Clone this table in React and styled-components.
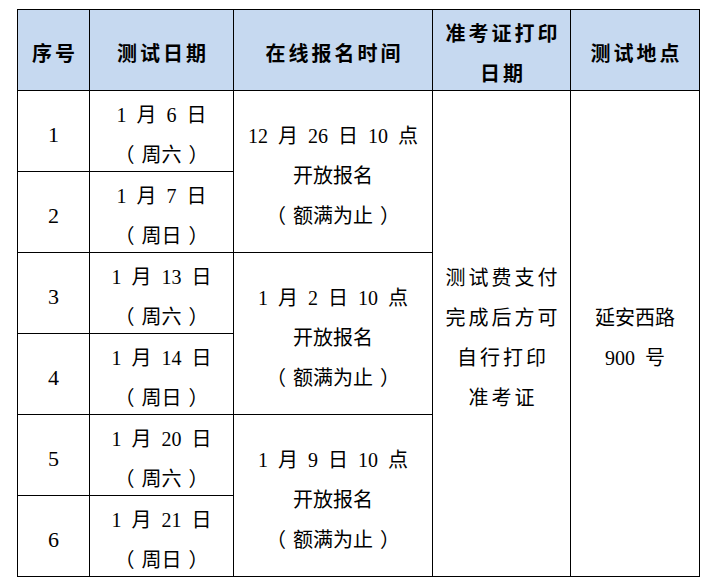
import styled, { createGlobalStyle } from "styled-components";

const GlobalStyle = createGlobalStyle`
  body {
    margin: 0;
    background: #ffffff;
    font-family: "Liberation Serif", "Noto Sans CJK SC", serif;
  }
`;

const Page = styled.div`
  padding: 9px 0 0 17px;
`;

const Table = styled.table`
  border-collapse: collapse;
  table-layout: fixed;
  width: 682px;
  color: #000000;
`;

const HeadRow = styled.tr`
  height: 81px;
  background: #c6d9f0;
`;

const BodyRow = styled.tr`
  height: 80.6px;
`;

const HeadCell = styled.th`
  border: 1px solid #000000;
  padding: 0 0 0 3px;
  font-size: 20px;
  font-weight: bold;
  letter-spacing: 3px;
  line-height: 40px;
  text-align: center;
  vertical-align: middle;
`;

const Cell = styled.td`
  border: 1px solid #000000;
  padding: 0 0 0 ${(p) => (p.$spaced ? 3 : 0)}px;
  font-size: ${(p) => (p.$big ? 22 : 20)}px;
  letter-spacing: ${(p) => (p.$spaced ? 3 : 0)}px;
  word-spacing: 5px;
  line-height: 40px;
  text-align: center;
  vertical-align: middle;
`;

/* nudges the glyphs down to sit where the Song-style font sat */
const Stack = styled.div`
  padding-top: 4px;
  margin-bottom: -4px;
`;

const Line = styled.div`
  white-space: nowrap;
`;

/* brackets stand a little apart from the words, as in the source document */
const Paren = styled.span`
  display: inline-block;
  margin: ${(p) => (p.$open ? "0 7px 0 0" : "0 0 0 7px")};
`;

const columns = [
  { width: 72, title: ["序号"] },
  { width: 144, title: ["测试日期"] },
  { width: 199, title: ["在线报名时间"] },
  { width: 138, title: ["准考证打印", "日期"] },
  { width: 129, title: ["测试地点"] },
];

const dates = [
  ["1 月 6 日", "（周六）"],
  ["1 月 7 日", "（周日）"],
  ["1 月 13 日", "（周六）"],
  ["1 月 14 日", "（周日）"],
  ["1 月 20 日", "（周六）"],
  ["1 月 21 日", "（周日）"],
];

const signups = ["12 月 26 日 10 点", "1 月 2 日 10 点", "1 月 9 日 10 点"];

function Text({ value }) {
  if (!value.startsWith("（")) return value;
  return (
    <>
      <Paren $open>（</Paren>
      {value.slice(1, -1)}
      <Paren>）</Paren>
    </>
  );
}

function Lines({ items }) {
  return (
    <Stack>
      {items.map((t) => (
        <Line key={t}>
          <Text value={t} />
        </Line>
      ))}
    </Stack>
  );
}

export default function App() {
  return (
    <Page>
      <GlobalStyle />
      <Table>
        <colgroup>
          {columns.map((c, i) => (
            <col key={i} style={{ width: c.width }} />
          ))}
        </colgroup>
        <thead>
          <HeadRow>
            {columns.map((c, i) => (
              <HeadCell key={i}>
                <Lines items={c.title} />
              </HeadCell>
            ))}
          </HeadRow>
        </thead>
        <tbody>
          {dates.map((d, i) => (
            <BodyRow key={i}>
              <Cell $big>
                <Lines items={[String(i + 1)]} />
              </Cell>
              <Cell>
                <Lines items={d} />
              </Cell>
              {i % 2 === 0 && (
                <Cell rowSpan={2}>
                  <Lines items={[signups[i / 2], "开放报名", "（额满为止）"]} />
                </Cell>
              )}
              {i === 0 && (
                <>
                  <Cell rowSpan={6} $spaced>
                    <Lines items={["测试费支付", "完成后方可", "自行打印", "准考证"]} />
                  </Cell>
                  <Cell rowSpan={6}>
                    <Lines items={["延安西路", "900 号"]} />
                  </Cell>
                </>
              )}
            </BodyRow>
          ))}
        </tbody>
      </Table>
    </Page>
  );
}
